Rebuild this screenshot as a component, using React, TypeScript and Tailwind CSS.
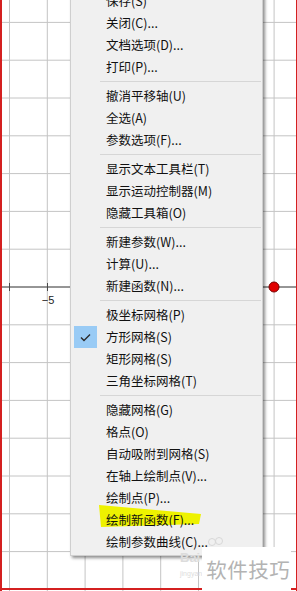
import React from "react";

type Item = { label: string; checked?: boolean; marked?: boolean };

const groups: Item[][] = [
  [
    { label: "保存(S)" },
    { label: "关闭(C)..." },
    { label: "文档选项(D)..." },
    { label: "打印(P)..." },
  ],
  [{ label: "撤消平移轴(U)" }, { label: "全选(A)" }, { label: "参数选项(F)..." }],
  [
    { label: "显示文本工具栏(T)" },
    { label: "显示运动控制器(M)" },
    { label: "隐藏工具箱(O)" },
  ],
  [{ label: "新建参数(W)..." }, { label: "计算(U)..." }, { label: "新建函数(N)..." }],
  [
    { label: "极坐标网格(P)" },
    { label: "方形网格(S)", checked: true },
    { label: "矩形网格(S)" },
    { label: "三角坐标网格(T)" },
  ],
  [
    { label: "隐藏网格(G)" },
    { label: "格点(O)" },
    { label: "自动吸附到网格(S)" },
    { label: "在轴上绘制点(V)..." },
    { label: "绘制点(P)..." },
    { label: "绘制新函数(F)...", marked: true },
    { label: "绘制参数曲线(C)..." },
  ],
];

const STEP = 37.8;

// the sketch canvas behind the menu
const GridCanvas = () => {
  const xs = Array.from({ length: 8 }, (_, i) => 9.5 + i * STEP);
  const ys = Array.from({ length: 22 }, (_, i) => 287 + (i - 8) * STEP);
  return (
    <svg width="297" height="591" className="block">
      <rect width="297" height="591" fill="#ffffff" />
      {xs.map((x) => (
        <line key={"v" + x} x1={x} y1="0" x2={x} y2="591" stroke="#c4c4c4" strokeWidth="1" />
      ))}
      {ys.map((y) => (
        <line key={"h" + y} x1="0" y1={y} x2="297" y2={y} stroke="#c4c4c4" strokeWidth="1" />
      ))}
      <line x1="0" y1="287" x2="297" y2="287" stroke="#4a4a4a" strokeWidth="1" />
      <line x1="9.5" y1="283" x2="9.5" y2="291" stroke="#4a4a4a" strokeWidth="1" />
      <line x1="47.5" y1="283" x2="47.5" y2="291" stroke="#4a4a4a" strokeWidth="1" />
      <text
        x="48"
        y="304"
        textAnchor="middle"
        fontSize="11"
        fill="#222"
        fontFamily="Liberation Sans, Arial, sans-serif"
      >
        −5
      </text>
      <circle cx="274" cy="287" r="5" fill="#e00000" stroke="#7a0000" strokeWidth="1" />
      <line x1="1" y1="0" x2="1" y2="591" stroke="#d42020" strokeWidth="2" />
      <line x1="296.5" y1="0" x2="296.5" y2="591" stroke="#d42020" strokeWidth="1" />
      <line x1="0" y1="589" x2="297" y2="589" stroke="#d42020" strokeWidth="2" />
    </svg>
  );
};

const MenuRow = ({ item }: { item: Item }) => (
  <div className="relative flex h-[22px] items-center">
    {item.checked && (
      <div className="absolute left-[3px] top-0 flex h-[22px] w-[23px] items-center justify-center bg-[#99cbf5]">
        <svg width="11" height="9" viewBox="0 0 11 9">
          <path d="M1 4.5 L4 7.5 L10 1.5" fill="none" stroke="#2b2b2b" strokeWidth="1.4" />
        </svg>
      </div>
    )}
    {item.marked && (
      <svg
        width="110"
        height="26"
        viewBox="0 0 110 26"
        className="absolute left-[27px] top-[-4px]"
      >
        <polygon points="1,0 103,9 101,19 3,22" fill="#eef200" />
      </svg>
    )}
    <span className="relative pl-[35px] text-[12.5px] leading-none text-[#111]">{item.label}</span>
  </div>
);

export default function App() {
  return (
    <div className="relative h-[591px] w-[297px] overflow-hidden bg-white font-['Noto_Sans_CJK_SC','Microsoft_YaHei',sans-serif]">
      <GridCanvas />

      {/* context menu */}
      <div className="absolute left-[70px] top-[-13px] w-[193px] border border-[#cfcfcf] bg-[#f0f0f0] py-[2px] shadow-[2px_2px_3px_rgba(0,0,0,0.45)]">
        {groups.map((group, gi) => (
          <div key={gi}>
            {gi > 0 && (
              <div className="flex h-[7px] items-center pl-[29px] pr-[1px]">
                <div className="h-px w-full bg-[#d6d6d6]" />
              </div>
            )}
            {group.map((item) => (
              <MenuRow key={item.label} item={item} />
            ))}
          </div>
        ))}
      </div>

      {/* watermark */}
      <div className="absolute left-[180px] top-[536px] flex h-[55px] w-[117px]">
        <div className="flex flex-col pt-[15px] font-['Liberation_Sans',sans-serif] leading-none">
          <span className="text-[13px] font-bold text-[#dcdcdc]">Bai</span>
          <span className="mt-[6px] text-[7px] text-[#dddddd]">jingyan</span>
        </div>
        <div className="flex flex-col">
          <svg width="22" height="11" className="ml-[5px]">
            <circle cx="5" cy="6" r="3.5" fill="none" stroke="#d8d8d8" strokeWidth="1" />
            <circle cx="12" cy="5" r="3.5" fill="none" stroke="#d8d8d8" strokeWidth="1" />
          </svg>
          <div className="flex h-[44px] w-[89px] items-center bg-white pl-[4px]">
            <span className="text-[20.5px] leading-none tracking-[0.5px] text-[#b3b3b3]">
              软件技巧
            </span>
          </div>
        </div>
      </div>
    </div>
  );
}
